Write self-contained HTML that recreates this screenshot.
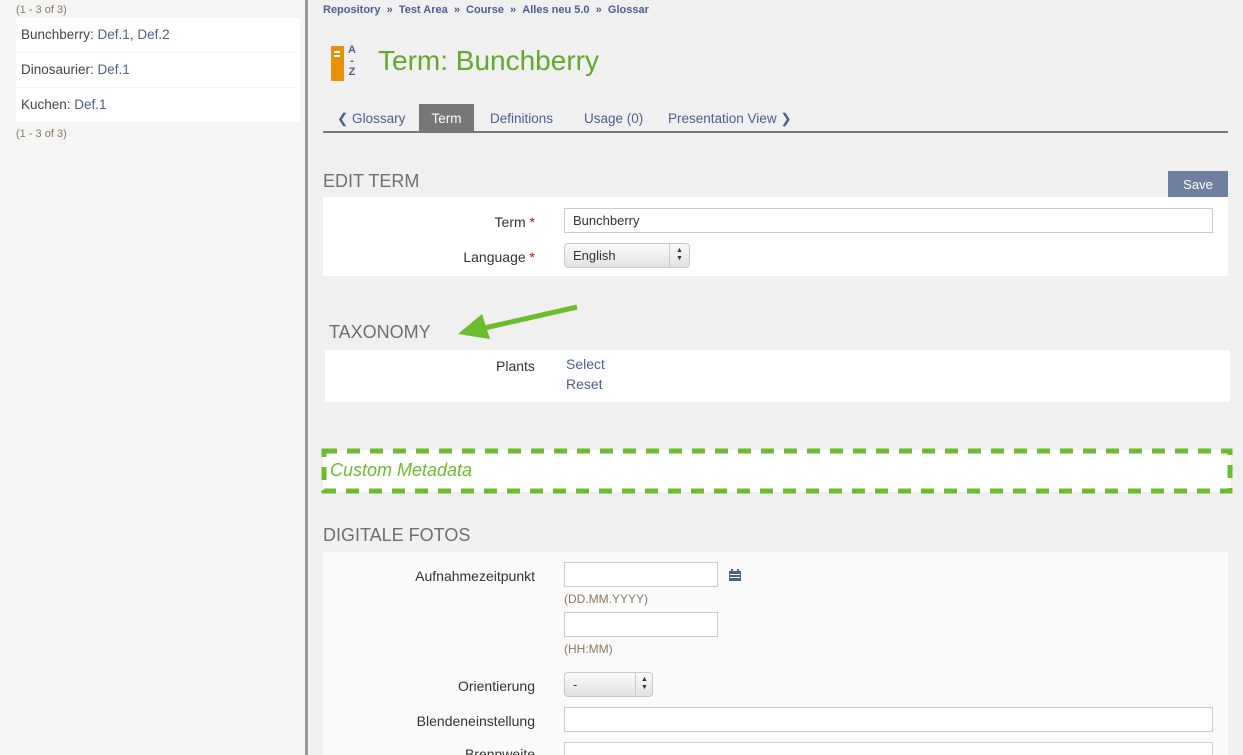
<!DOCTYPE html>
<html><head><meta charset="utf-8"><style>
*{box-sizing:border-box;margin:0;padding:0}
html,body{width:1243px;height:755px;overflow:hidden}
body{background:#f0f0f0;font-family:"Liberation Sans",sans-serif;font-size:14px;color:#333;position:relative}
.a{position:absolute}
a{color:#4c5f8e;text-decoration:none}
.side{left:0;top:0;width:305px;height:755px;background:#f5f5f5}
.vbar{left:305px;top:0;width:3px;height:755px;background:#9a9a9a}
.item{left:16px;width:284px;height:34px;background:#fff;padding:9px 5px;font-size:13.5px;color:#444}
.item b{font-weight:normal;color:#4c5f8e}
.small{font-size:11px;color:#8a7a60}
.box{background:#fff}
h2{position:absolute;font-weight:normal;font-size:18px;color:#6f6f6f}
.lbl{text-align:right;width:215px;font-size:14px;color:#333}
.inp{background:#fff;border:1px solid #ccc;height:25px}
.sel{border:1px solid #c8c8c8;border-radius:4px;background:linear-gradient(#fafafa,#e2e2e2);height:25px;font-size:13px;padding:4px 8px}
.star{color:#d00}
</style></head><body>
<div class="a side"></div>
<div class="a small" style="left:16px;top:4px">(1 - 3 of 3)</div>
<div class="a item" style="top:18px">Bunchberry: <b>Def.1</b>, <b>Def.2</b></div>
<div class="a item" style="top:53px">Dinosaurier: <b>Def.1</b></div>
<div class="a item" style="top:88px">Kuchen: <b>Def.1</b></div>
<div class="a small" style="left:16px;top:128px">(1 - 3 of 3)</div>
<div class="a vbar"></div>

<div class="a" style="left:323px;top:4px;font-size:11px;color:#4c5f8e;font-weight:bold">Repository &nbsp;» &nbsp;Test Area &nbsp;» &nbsp;Course &nbsp;» &nbsp;Alles neu 5.0 &nbsp;» &nbsp;Glossar</div>
<div class="a" style="left:331px;top:46px;width:13px;height:35px;background:#e8900a"></div>
<div class="a" style="left:334px;top:51px;width:6px;height:2px;background:#fff"></div>
<div class="a" style="left:334px;top:55px;width:6px;height:2px;background:#fff"></div>
<div class="a" style="left:348px;top:45px;font-size:11px;font-weight:bold;color:#4c5f8e;line-height:11px;text-align:center">A<br>-<br>Z</div>
<div class="a" style="left:378px;top:45px;font-size:28px;color:#64a82c">Term: Bunchberry</div>

<div class="a" style="left:323px;top:131px;width:905px;height:2px;background:#777"></div>
<div class="a" style="left:337px;top:111px;font-size:13.5px;color:#4c5f8e">&#10094; Glossary</div>
<div class="a" style="left:419px;top:104px;width:55px;height:27px;background:#777;color:#fff;font-size:13.5px;padding-top:7px;text-align:center">Term</div>
<div class="a" style="left:490px;top:111px;font-size:13.5px;color:#4c5f8e">Definitions</div>
<div class="a" style="left:584px;top:111px;font-size:13.5px;color:#4c5f8e">Usage (0)</div>
<div class="a" style="left:668px;top:111px;font-size:13.5px;color:#4c5f8e">Presentation View &#10095;</div>

<h2 style="left:323px;top:171px">EDIT TERM</h2>
<div class="a" style="left:1168px;top:171px;width:60px;height:26px;background:#6f7fa0;color:#fff;font-size:13px;text-align:center;padding-top:6px">Save</div>
<div class="a box" style="left:323px;top:197px;width:905px;height:79px"></div>
<div class="a lbl" style="left:320px;top:214px">Term <span class="star">*</span></div>
<div class="a inp" style="left:564px;top:208px;width:649px;font-size:13px;padding:4px 8px">Bunchberry</div>
<div class="a lbl" style="left:320px;top:249px">Language <span class="star">*</span></div>
<div class="a sel" style="left:564px;top:243px;width:126px">English<span style="position:absolute;left:104px;top:0;height:23px;border-left:1px solid #ccc;padding:3px 6px;font-size:7px;line-height:8px">&#9650;<br>&#9660;</span></div>

<h2 style="left:329px;top:322px">TAXONOMY</h2>
<svg class="a" style="left:455px;top:303px" width="125" height="40"><line x1="122" y1="4" x2="25" y2="26" stroke="#6cbd2e" stroke-width="5"/><polygon points="3,31 27,11 35,36" fill="#6cbd2e"/></svg>
<div class="a box" style="left:325px;top:350px;width:905px;height:52px"></div>
<div class="a" style="left:496px;top:358px">Plants</div>
<div class="a" style="left:566px;top:354px;color:#4c5f8e;line-height:20px">Select<br>Reset</div>

<div class="a box" style="left:323px;top:450px;width:908px;height:42px"></div>
<svg class="a" style="left:321px;top:448px" width="912" height="46"><rect x="3" y="3" width="906" height="40" fill="none" stroke="#6cbd2e" stroke-width="5" stroke-dasharray="13,10"/></svg>
<div class="a" style="left:330px;top:460px;font-size:18px;font-style:italic;color:#6cbd2e">Custom Metadata</div>

<h2 style="left:323px;top:525px">DIGITALE FOTOS</h2>
<div class="a" style="left:323px;top:552px;width:905px;height:203px;background:#fafafa"></div>
<div class="a lbl" style="left:320px;top:568px">Aufnahmezeitpunkt</div>
<div class="a inp" style="left:564px;top:562px;width:154px"></div>
<svg class="a" style="left:729px;top:569px" width="12" height="12"><rect x="0" y="2" width="12" height="10" fill="#4c5f8e"/><rect x="2" y="0" width="2" height="3" fill="#4c5f8e"/><rect x="8" y="0" width="2" height="3" fill="#4c5f8e"/><g fill="#fff"><rect x="1" y="5" width="10" height="1"/><rect x="1" y="8" width="10" height="1"/></g></svg>
<div class="a small" style="left:564px;top:592px;font-size:12px">(DD.MM.YYYY)</div>
<div class="a inp" style="left:564px;top:612px;width:154px"></div>
<div class="a small" style="left:564px;top:642px;font-size:12px">(HH:MM)</div>
<div class="a lbl" style="left:320px;top:678px">Orientierung</div>
<div class="a sel" style="left:564px;top:672px;width:89px">-<span style="position:absolute;left:70px;top:0;height:23px;border-left:1px solid #ccc;padding:3px 5px;font-size:7px;line-height:8px">&#9650;<br>&#9660;</span></div>
<div class="a lbl" style="left:320px;top:713px">Blendeneinstellung</div>
<div class="a inp" style="left:564px;top:707px;width:649px"></div>
<div class="a lbl" style="left:320px;top:746px">Brennweite</div>
<div class="a inp" style="left:564px;top:742px;width:649px"></div>
</body></html>
